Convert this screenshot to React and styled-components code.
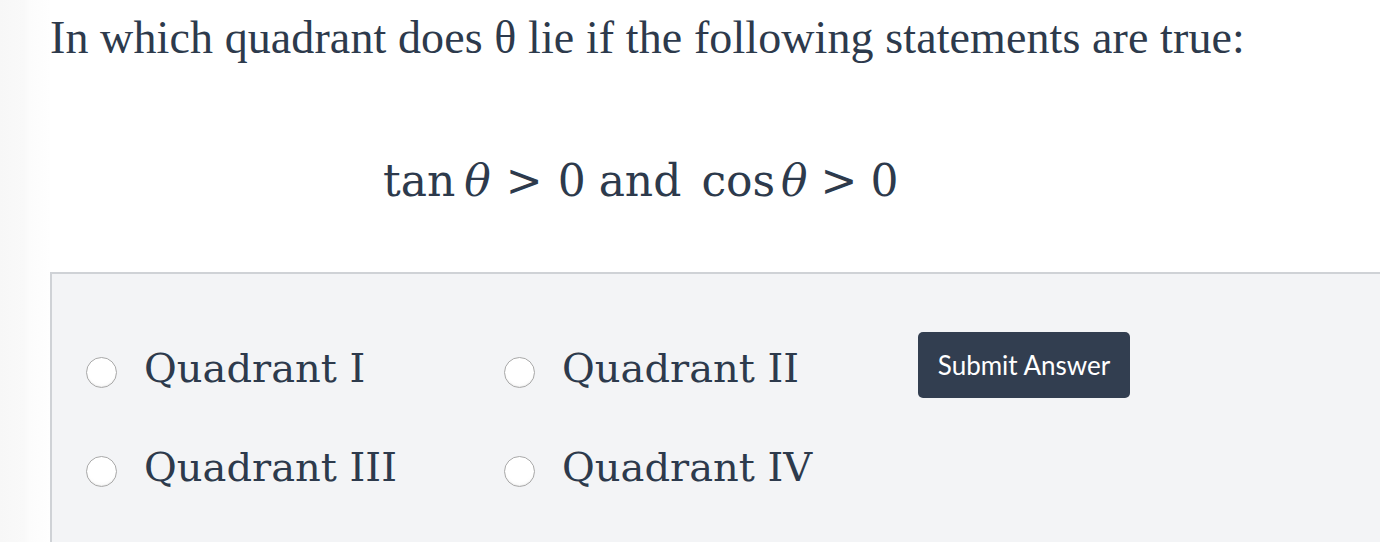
import React from "react";
import styled, { createGlobalStyle } from "styled-components";

const GlobalStyle = createGlobalStyle`
  html, body { margin: 0; padding: 0; background: #ffffff; }
  #root { min-height: 542px; }
`;

const ink = "#2d3a4c";

const Page = styled.div`
  display: flex;
  min-height: 542px;
  width: 1380px;
  overflow: hidden;
`;

const Gutter = styled.div`
  width: 50px;
  flex: 0 0 50px;
  background: linear-gradient(to right, #f7f7f7 0px, #f9f9f9 24px, #fcfcfc 30px, #fefefe 50px);
`;

const Content = styled.div`
  flex: 1;
  display: flex;
  flex-direction: column;
`;

const Title = styled.h1`
  margin: 0;
  padding-top: 12px;
  font-family: "Liberation Serif", Georgia, serif;
  font-weight: 400;
  font-size: 46px;
  letter-spacing: 0.1px;
  line-height: 52px;
  color: ${ink};
  white-space: nowrap;
`;

const MathBlock = styled.div`
  height: 208px;
  padding-top: 24px;
  box-sizing: border-box;
  display: flex;
  align-items: center;
  padding-left: 333px;
  font-family: "DejaVu Serif", serif;
  font-size: 44px;
  color: ${ink};
  white-space: nowrap;
`;

const Word = styled.span`
  margin-left: ${(p) => p.$before || 0}px;
  margin-right: ${(p) => p.$after || 0}px;
`;

const Var = styled.span`
  font-style: italic;
`;

const Rel = styled.span`
  margin: 0 ${(p) => p.$gap || 16}px;
`;

const Panel = styled.div`
  flex: 1;
  background: #f3f4f6;
  border-top: 2px solid #cfd2d6;
  border-left: 2px solid #cfd2d6;
  padding: 58px 0 40px 34px;
  display: grid;
  grid-template-columns: 418px 414px auto;
  grid-template-rows: 80px 80px;
  row-gap: 19px;
  align-items: center;
`;

const Option = styled.label`
  display: flex;
  align-items: center;
  gap: 27px;
  cursor: pointer;
`;

const Radio = styled.span`
  width: 29px;
  height: 29px;
  flex: 0 0 29px;
  border-radius: 50%;
  border: 1px solid #a9a9a9;
  background: radial-gradient(circle at 50% 35%, #ffffff 60%, #f4f4f4 100%);
  box-shadow: inset 0 -1px 1px rgba(0, 0, 0, 0.06);
`;

const OptionText = styled.span`
  font-family: "DejaVu Serif", serif;
  font-size: 40px;
  line-height: 40px;
  padding-bottom: 8px;
  color: ${ink};
  white-space: nowrap;
`;

const SubmitButton = styled.button`
  grid-column: 3;
  grid-row: 1;
  align-self: start;
  justify-self: start;
  width: 212px;
  height: 66px;
  border: none;
  border-radius: 5px;
  background: #323e50;
  color: #ffffff;
  font-family: Lato, "Liberation Sans", sans-serif;
  font-size: 26px;
  padding: 0;
  cursor: pointer;
`;

const options = [
  { label: "Quadrant I", col: 1, row: 1 },
  { label: "Quadrant II", col: 2, row: 1 },
  { label: "Quadrant III", col: 1, row: 2 },
  { label: "Quadrant IV", col: 2, row: 2 },
];

const Cell = styled.div`
  grid-column: ${(p) => p.$col};
  grid-row: ${(p) => p.$row};
`;

export default function App() {
  return (
    <>
      <GlobalStyle />
      <Page>
        <Gutter />
        <Content>
          <Title>In which quadrant does θ lie if the following statements are true:</Title>
          <MathBlock>
            <Word $after={9}>tan</Word>
            <Var>θ</Var>
            <Rel $gap={15}>&gt;</Rel>
            <span>0</span>
            <Word $before={13}>and</Word>
            <Word $before={20} $after={6}>cos</Word>
            <Var>θ</Var>
            <Rel $gap={13}>&gt;</Rel>
            <span>0</span>
          </MathBlock>
          <Panel>
            {options.map((o) => (
              <Cell key={o.label} $col={o.col} $row={o.row}>
                <Option>
                  <Radio />
                  <OptionText>{o.label}</OptionText>
                </Option>
              </Cell>
            ))}
            <SubmitButton>Submit Answer</SubmitButton>
          </Panel>
        </Content>
      </Page>
    </>
  );
}
